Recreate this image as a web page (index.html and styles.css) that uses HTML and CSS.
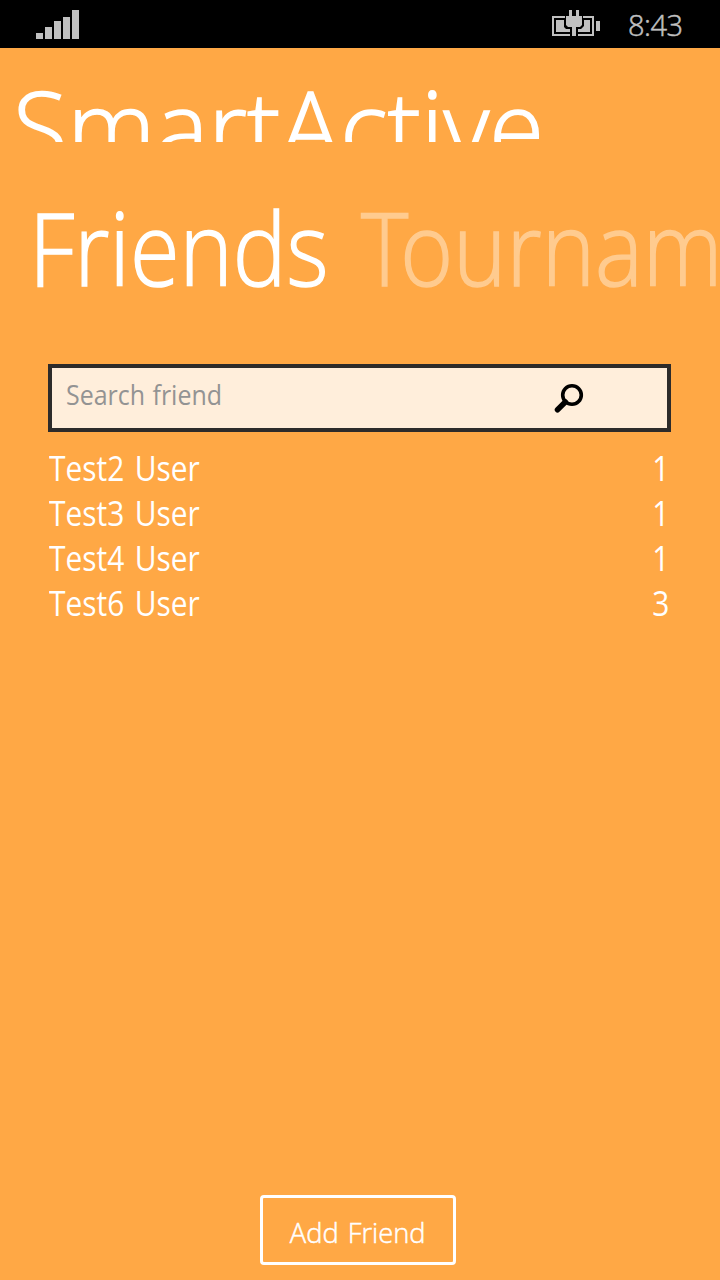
FILE: index.html
```html
<!DOCTYPE html>
<html lang="en">
<head>
<meta charset="utf-8">
<title>SmartActive</title>
<link rel="stylesheet" href="styles.css">
</head>
<body>
<header class="status">
  <svg class="signal" width="43" height="29" viewBox="0 0 43 29" shape-rendering="crispEdges"><path d="M0 23h7v6H0zM9 17h7v12H9zM18 11h7v18h-7zM27 7h7v22h-7zM36 0h7v29h-7z"/></svg>
  <div class="status-right">
    <svg class="battery" width="48" height="26" viewBox="0 0 48 26"><path d="M0 6h13v2H2v16h16v2H0zM31 6h11v20H26v-2h14V8h-9zM44 11h4v10h-4zM4 10h8v7l2 2h4v3H4zM38 10v12H26v-3h3l3-3v-6zM17 0h3v6h4V0h3v6h3v9l-2 2h-4v9h-4v-9h-4l-2-2V6h3z"/></svg>
    <span class="clock">8:43</span>
  </div>
</header>
<main class="page">
  <h1 class="title"><span class="fit title-text">SmartActive</span></h1>
  <nav class="tabs">
    <span class="tab active"><span class="fit tab-text">Friends</span></span>
    <span class="tab"><span class="fit tab-text"><span class="kern">T</span>ournaments</span></span>
  </nav>
  <section class="content">
    <div class="search">
      <span class="fit placeholder">Search friend</span>
      <svg class="glass" width="32" height="32" viewBox="0 0 32 32"><circle cx="19" cy="12" r="9.300"/><path class="handle" d="M12.300 19L4.500 26.800"/></svg>
    </div>
    <ul class="friends">
      <li><span class="fit name">Test2 User</span><span class="fit score">1</span></li>
      <li><span class="fit name">Test3 User</span><span class="fit score">1</span></li>
      <li><span class="fit name">Test4 User</span><span class="fit score">1</span></li>
      <li><span class="fit name">Test6 User</span><span class="fit score">3</span></li>
    </ul>
  </section>
  <button class="add"><span class="fit add-text">Add Friend</span></button>
</main>
</body>
</html>
```
FILE: styles.css
```css
* { box-sizing: border-box; }
body {
  margin: 0;
  width: 720px;
  height: 1280px;
  overflow: hidden;
  display: flex;
  flex-direction: column;
  background: #ffa845;
  color: #fff;
  font-family: "Open Sans", "Noto Sans", sans-serif;
}
.status {
  height: 48px;
  flex: none;
  display: flex;
  justify-content: space-between;
  padding: 10px 37px 0 36px;
  background: #000;
  color: #c0c0c0;
  fill: #c0c0c0;
}
.status-right { display: flex; gap: 27px; }
.clock {
  width: 56px;
  padding-left: 1px;
  font-size: 29px;
  font-weight: 300;
  line-height: 30px;
  letter-spacing: -0.500px;
  -webkit-text-stroke: 0.500px;
}
.page { flex: 1; display: flex; flex-direction: column; }
.fit { display: inline-block; white-space: nowrap; transform-origin: left center; }
.title {
  margin: 0;
  height: 94px;
  overflow: hidden;
  padding-left: 13px;
  font-size: 101px;
  font-weight: 300;
  line-height: 156px;
}
.title-text { transform: scaleX(0.987); -webkit-text-stroke: 1.500px; }
.tabs {
  height: 222px;
  display: flex;
  overflow: hidden;
  padding-left: 29px;
  font-size: 101px;
  font-weight: 300;
  line-height: 210px;
}
.tab { flex: none; width: 332px; color: #ffcb8f; }
.tab.active { color: #fff; }
.tab-text { transform: scaleX(0.894); -webkit-text-stroke: 1.500px; }
.kern { letter-spacing: -9px; }
.content { padding: 0 49px 0 48px; flex: 1; }
.search {
  height: 68px;
  display: flex;
  justify-content: space-between;
  padding: 9px 82px 0 14px;
  background: #ffeedb;
  border: 4px solid #2d2b2a;
  color: #939393;
  font-size: 27px;
  line-height: 36px;
}
.placeholder { transform: scaleX(0.925); word-spacing: 1px; }
.glass { margin-top: 6px; fill: none; stroke: #000; stroke-width: 3.600; }
.handle { stroke-width: 5.500; stroke-linecap: round; }
.friends { list-style: none; margin: 14px 0 0; padding: 0; font-size: 34px; line-height: 45px; }
.friends li { display: flex; justify-content: space-between; height: 45px; }
.name { transform: scaleX(0.88); word-spacing: 3px; margin-left: 1px; }
.score { transform: scaleX(0.88); transform-origin: right center; margin-right: 2px; }
.add {
  align-self: center;
  width: 196px;
  height: 70px;
  margin: 0 4px 15px 0;
  padding: 4px 0 0;
  border: 3px solid #fff;
  border-radius: 4px;
  background: transparent;
  color: #fff;
  font: 300 28px "Open Sans", "Noto Sans", sans-serif;
}
.add-text {
  transform: scaleX(0.975);
  transform-origin: center;
  word-spacing: 2px;
  -webkit-text-stroke: 0.500px;
}
```
